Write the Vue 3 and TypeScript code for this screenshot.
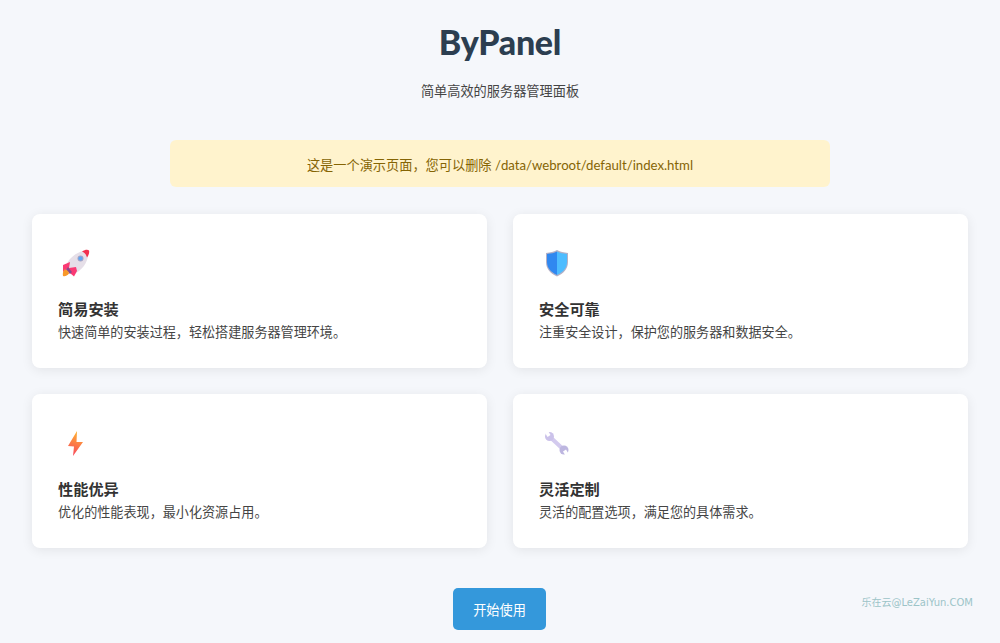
<script setup lang="ts">
const features = [
  { key: 'rocket', title: '简易安装', text: '快速简单的安装过程，轻松搭建服务器管理环境。' },
  { key: 'shield', title: '安全可靠', text: '注重安全设计，保护您的服务器和数据安全。' },
  { key: 'bolt', title: '性能优异', text: '优化的性能表现，最小化资源占用。' },
  { key: 'wrench', title: '灵活定制', text: '灵活的配置选项，满足您的具体需求。' },
]
</script>

<template>
  <div class="page">
    <header class="header">
      <h1>ByPanel</h1>
      <p>简单高效的服务器管理面板</p>
    </header>

    <div class="notice">这是一个演示页面，您可以删除 /data/webroot/default/index.html</div>

    <div class="features">
      <div v-for="f in features" :key="f.key" class="card">
        <div class="icon">
          <svg v-if="f.key === 'rocket'" viewBox="0 0 32 32" width="32" height="32">
            <path d="M8 20 C9 13 17 6 25 4 L30 9 C29 16 24 24 15 27 Z" fill="#e6dfe8" />
            <path d="M24 4.500 C27 2.500 30 2.500 31 3.500 C31.500 5 31 8 29 10.500 C28.500 8 26.500 5.500 24 4.500 Z" fill="#f2304e" />
            <circle cx="22.500" cy="11.500" r="3" fill="#a5a3c4" />
            <circle cx="22.500" cy="11.500" r="2.100" fill="#5fa8f2" />
            <path d="M12 15 L5 18 L5 25 L11 21 Z" fill="#fa3a74" />
            <path d="M18 20 L11 21 L12 26 L16 29.500 L19 24 Z" fill="#fa3a74" />
            <path d="M10 20 L14 25 L12 27 L8 23 Z" fill="#8a4a8c" />
            <path d="M6.500 22.500 C9 22.500 11 25 11 26.500 C9 29 7 29.500 5 29 C4.500 27 5 24 6.500 22.500 Z" fill="#f8982a" />
          </svg>
          <svg v-else-if="f.key === 'shield'" viewBox="0 0 32 32" width="32" height="32">
            <path d="M18 3 C21.500 5 24.500 5.500 29 6 L29 15 C29 22 24.500 26.500 18 29.500 C11.500 26.500 7 22 7 15 L7 6 C11.500 5.500 14.500 5 18 3 Z" fill="#b3b0c6" />
            <path d="M18 4.500 L18 28 C12.500 25.500 8 21.500 8 15 L8 7 C12 6.500 15 6 18 4.500 Z" fill="#3088f0" />
            <path d="M18 4.500 C21 6 24 6.500 28 7 L28 15 C28 21.500 23.500 25.500 18 28 Z" fill="#4dbcff" />
          </svg>
          <svg v-else-if="f.key === 'bolt'" viewBox="0 0 32 32" width="32" height="32">
            <defs>
              <linearGradient id="bolt-fill" x1="0.600" y1="0" x2="0.400" y2="1">
                <stop offset="0" stop-color="#ffb52e" />
                <stop offset="1" stop-color="#f8475e" />
              </linearGradient>
            </defs>
            <path d="M19 4 L10 19 L16 19.500 L15 29 L25 15 L18.500 15 Z" fill="url(#bolt-fill)" />
          </svg>
          <svg v-else viewBox="0 0 32 32" width="32" height="32">
            <line x1="10" y1="9" x2="25" y2="23" stroke="#d3caee" stroke-width="4" />
            <circle cx="10.500" cy="9.500" r="4.500" fill="#cbc2ea" />
            <circle cx="25" cy="23" r="4.500" fill="#bdb6e0" />
            <line x1="10" y1="9" x2="7" y2="4" stroke="#fff" stroke-width="3.500" />
            <line x1="25.500" y1="23.500" x2="28.500" y2="28.500" stroke="#fff" stroke-width="3.500" />
          </svg>
        </div>
        <h3>{{ f.title }}</h3>
        <p>{{ f.text }}</p>
      </div>
    </div>

    <div class="actions">
      <a class="btn" href="#">开始使用</a>
    </div>

    <span class="mark">乐在云@LeZaiYun.COM</span>
  </div>
</template>

<style>
html,
body {
  margin: 0;
  background: #f5f7fb;
}
</style>

<style scoped>
.page {
  position: relative;
  box-sizing: border-box;
  height: 643px;
  overflow: hidden;
  padding: 18px 32px 0;
  background: #f5f7fb;
  color: #333;
  font-family: Lato, "Noto Sans CJK SC", sans-serif;
}

.header {
  text-align: center;
}

.header h1 {
  margin: 0;
  font-size: 34px;
  line-height: 47px;
  font-weight: 900;
  letter-spacing: -0.3px;
  color: #2c3e50;
}

.header p {
  margin: 16px 0 0;
  font-size: 13.200px;
  line-height: 20px;
  color: #444;
}

.notice {
  box-sizing: border-box;
  width: 660px;
  height: 47px;
  margin: 39px auto 27px;
  border-radius: 6px;
  background: #fff3cd;
  color: #856404;
  font-size: 13.200px;
  line-height: 51px;
  text-align: center;
}

.features {
  display: grid;
  grid-template-columns: 1fr 1fr;
  gap: 26px;
}

.card {
  box-sizing: border-box;
  height: 154px;
  padding: 33px 26px 0;
  border-radius: 8px;
  background: #fff;
  box-shadow: 0 2px 12px rgba(0, 0, 0, 0.08);
}

.icon {
  display: flex;
  width: 36px;
  height: 32px;
  margin-bottom: 19px;
}

.card h3 {
  margin: 0;
  font-size: 15.200px;
  line-height: 22px;
  font-weight: 700;
  color: #333;
}

.card p {
  margin: 2px 0 0;
  font-size: 13.100px;
  line-height: 20px;
  color: #444;
}

.actions {
  display: flex;
  justify-content: center;
  margin-top: 40px;
}

.btn {
  width: 93px;
  height: 42px;
  margin-right: 1px;
  border-radius: 5px;
  background: #3498db;
  color: #fff;
  font-size: 13.200px;
  line-height: 44px;
  text-align: center;
  text-decoration: none;
}

.mark {
  position: absolute;
  right: 27px;
  top: 596px;
  font-family: "DejaVu Sans", "Noto Sans CJK SC", sans-serif;
  font-size: 10px;
  line-height: 14px;
  color: #9cc4c8;
}
</style>
